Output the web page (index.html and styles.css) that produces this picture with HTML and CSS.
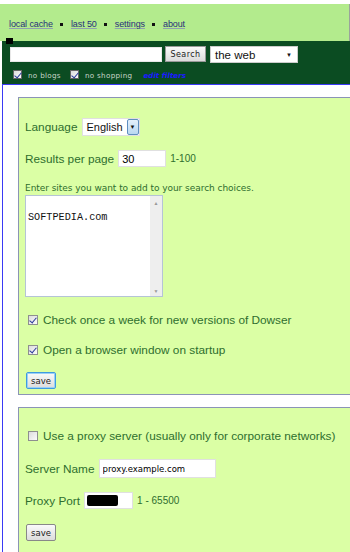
FILE: index.html
```html
<!DOCTYPE html>
<html lang="en">
<head>
    <meta charset="UTF-8">
    <title>Dowser - settings</title>
    <link rel="stylesheet" href="styles.css">
</head>
<body>
    <div id="topBar">
        <div id="nav">
            <a href="#">local cache</a><span class="dot"></span><a href="#">last 50</a><span class="dot"></span><a href="#">settings</a><span class="dot"></span><a href="#">about</a>
        </div>
    </div>
    <div id="marker"></div>
    <div id="searchBar">
        <div class="searchRow">
            <input type="text" class="query">
            <button class="searchBtn">Search</button>
            <div class="fakeSelect wide"><span>the web</span><span class="arrow">&#9660;</span></div>
        </div>
        <div class="filterRow">
            <span class="chk on small"></span><span class="filterLabel">no blogs</span>
            <span class="chk on small"></span><span class="filterLabel">no shopping</span>
            <a href="#" class="editFilters">edit filters</a>
        </div>
    </div>
    <div id="main">
        <div class="panel first">
            <div class="row lang">
                <span class="label">Language</span>
                <div class="fakeSelect lang"><span>English</span><span class="langArrow">&#9660;</span></div>
            </div>
            <div class="row results">
                <span class="label">Results per page</span>
                <input type="text" class="num" value="30">
                <span class="hint">1-100</span>
            </div>
            <div class="sitesLabel">Enter sites you want to add to your search choices.</div>
            <div class="sites">
                <div class="sitesText"><br>SOFTPEDIA.com</div>
                <div class="scroll"><span>&#9650;</span><span>&#9660;</span></div>
            </div>
            <div class="row check">
                <span class="chk on"></span>
                <span class="label">Check once a week for new versions of Dowser</span>
            </div>
            <div class="row check">
                <span class="chk on"></span>
                <span class="label">Open a browser window on startup</span>
            </div>
            <button class="save focused">save</button>
        </div>
        <div class="panel second">
            <div class="row check proxy">
                <span class="chk"></span>
                <span class="label">Use a proxy server (usually only for corporate networks)</span>
            </div>
            <div class="row server">
                <span class="label">Server Name</span>
                <input type="text" class="serverInput" value="proxy.example.com">
            </div>
            <div class="row port">
                <span class="label">Proxy Port</span>
                <div class="portInput"><span class="redact"></span></div>
                <span class="hint">1 - 65500</span>
            </div>
            <button class="save">save</button>
        </div>
    </div>
</body>
</html>
```

FILE: styles.css
```css
body {
    margin: 0;
    padding: 0;
    background-color: white;
    font-family: "Liberation Sans", Arial, sans-serif;
    overflow: hidden;
    position: relative;
}
#topBar {
    margin-top: 4px;
    height: 37px;
    background-color: #b3eb8d;
    border-right: 1px solid #9aa39a;
    box-sizing: border-box;
    padding: 15px 0 0 9px;
}
#nav {
    font-size: 9px;
    letter-spacing: -0.1px;
    display: flex;
    align-items: center;
}
#nav a {
    color: #27307a;
    text-decoration: underline;
    text-decoration-color: #8fa0b0;
}
.dot {
    display: inline-block;
    width: 3px;
    height: 3px;
    background: #111;
    margin: 0 8px 0 7px;
}
#marker {
    position: absolute;
    left: 6px;
    top: 38px;
    width: 7px;
    height: 6px;
    background: black;
}
#searchBar {
    margin-left: 2px;
    height: 43px;
    background-color: #0b4c22;
    box-sizing: border-box;
    padding: 5px 0 0 8px;
}
.searchRow {
    display: flex;
    align-items: flex-start;
}
.query {
    width: 152px;
    height: 15px;
    margin: 1px 3px 0 0;
    border: 1px solid #e8e8e8;
    padding: 0;
    box-sizing: border-box;
}
.searchBtn {
    width: 41px;
    height: 16px;
    margin: 0 4px 0 0;
    padding: 0;
    font-family: "DejaVu Sans", sans-serif;
    font-size: 8px;
    letter-spacing: 0.4px;
    background: linear-gradient(#fafafa, #dcdcdc);
    border: 1px solid #9a9a9a;
    color: #222;
}
.fakeSelect {
    background: white;
    display: flex;
    align-items: center;
    justify-content: space-between;
    box-sizing: border-box;
}
.fakeSelect.wide {
    width: 88px;
    height: 17px;
    padding: 0 5px 0 4px;
    font-size: 11.5px;
    color: #111;
    border: 1px solid #ccc;
}
.arrow {
    font-size: 6px;
}
.filterRow {
    display: flex;
    align-items: center;
    margin-top: 5px;
    padding-left: 3px;
    color: #c9d6c9;
    font-size: 7.2px;
    font-family: "DejaVu Sans", sans-serif;
    letter-spacing: 0.3px;
}
.filterLabel {
    margin: 3px 9px 0 6px;
}
.editFilters {
    color: #1a1aff;
    font-weight: bold;
    font-style: italic;
    text-decoration: none;
    letter-spacing: 0;
    margin: 3px 0 0 2px;
}
#main {
    margin-left: 2px;
    border-left: 1px solid #3a3af5;
    border-top: 1px solid #3a3af5;
    padding: 12px 0 0 15px;
    height: 600px;
}
.panel {
    background-color: #dbffa5;
    border: 1px solid #8b94b6;
    border-right: none;
    padding: 20px 0 0 6px;
    box-sizing: border-box;
    color: #2e6e2e;
}
.panel.first {
    height: 298px;
    margin-bottom: 12px;
}
.panel.second {
    height: 160px;
}
.row {
    display: flex;
    align-items: center;
}
.row.lang {
    height: 18px;
}
.row.results {
    height: 17px;
    margin-top: 14px;
}
.label {
    font-size: 11.8px;
    margin-right: 4px;
}
.fakeSelect.lang {
    width: 58px;
    height: 18px;
    border: 1px solid #e0e0e0;
    font-size: 11px;
    color: #111;
    padding-left: 4px;
}
.langArrow {
    width: 12px;
    height: 16px;
    box-sizing: border-box;
    border: 1px solid #5f8fc0;
    border-radius: 2px;
    background: linear-gradient(#e4f0fb, #b9d7f1);
    color: #111;
    font-size: 6px;
    display: flex;
    align-items: center;
    justify-content: center;
}
.num {
    width: 48px;
    height: 17px;
    box-sizing: border-box;
    border: 1px solid #e0e0e0;
    padding: 0 3px;
    font-family: "Liberation Sans", sans-serif;
    font-size: 11px;
    margin-right: 4px;
}
.hint {
    font-size: 10px;
}
.sitesLabel {
    margin: 16px 0 1px 0;
    height: 11px;
    font-family: "DejaVu Sans", sans-serif;
    font-size: 9px;
    letter-spacing: -0.05px;
}
.sites {
    width: 138px;
    height: 102px;
    background: white;
    border: 1px solid #b5c4d6;
    box-sizing: border-box;
    display: flex;
    justify-content: space-between;
}
.sitesText {
    font-family: "Liberation Mono", monospace;
    font-size: 10.2px;
    line-height: 13px;
    color: #111;
    padding: 2px 0 0 2px;
}
.scroll {
    width: 12px;
    background: #eeeeee;
    display: flex;
    flex-direction: column;
    justify-content: space-between;
    align-items: center;
    font-size: 5px;
    color: #999;
    padding: 4px 0 2px;
}
.row.check {
    margin-left: 3px;
    height: 16px;
    margin-top: 14px;
}
.sites + .row.check {
    margin-top: 15px;
}
.row.check.proxy {
    margin-top: 0;
}
.chk {
    display: inline-block;
    width: 10px;
    height: 10px;
    box-sizing: border-box;
    border: 1px solid #8e8f8f;
    background: linear-gradient(135deg, #dcdcdc, #fbfbfb);
    margin-right: 5px;
    position: relative;
}
.chk.on::after {
    content: "";
    position: absolute;
    left: 2px;
    top: 0px;
    width: 3px;
    height: 6px;
    border-right: 1.5px solid #2a3a9a;
    border-bottom: 1.5px solid #2a3a9a;
    transform: rotate(40deg);
}
.chk.small {
    width: 9px;
    height: 9px;
    margin-right: 0;
    border-color: #666;
}
.save {
    display: block;
    margin: 14px 0 0 1px;
    width: 30px;
    height: 17px;
    padding: 0;
    font-size: 8.5px;
    font-family: "DejaVu Sans", sans-serif;
    background: linear-gradient(#fafafa, #dcdcdc);
    border: 1px solid #888;
    border-radius: 2px;
    color: #222;
}
.save.focused {
    border-color: #3f9be0;
    box-shadow: inset 0 0 0 1px #9ad0f5;
}
.row.server {
    height: 19px;
    margin-top: 15px;
}
.serverInput {
    width: 117px;
    height: 19px;
    box-sizing: border-box;
    border: 1px solid #e0e0e0;
    padding: 0 3px;
    font-family: "DejaVu Sans", sans-serif;
    font-size: 8.5px;
}
.row.port {
    height: 17px;
    margin-top: 14px;
}
.row.port + .save {
    margin-top: 15px;
}
.portInput {
    width: 49px;
    height: 17px;
    background: white;
    border: 1px solid #e0e0e0;
    box-sizing: border-box;
    margin-right: 4px;
    display: flex;
    align-items: center;
    padding-left: 2px;
}
.redact {
    width: 31px;
    height: 11px;
    background: black;
    border-radius: 2px;
}
```
